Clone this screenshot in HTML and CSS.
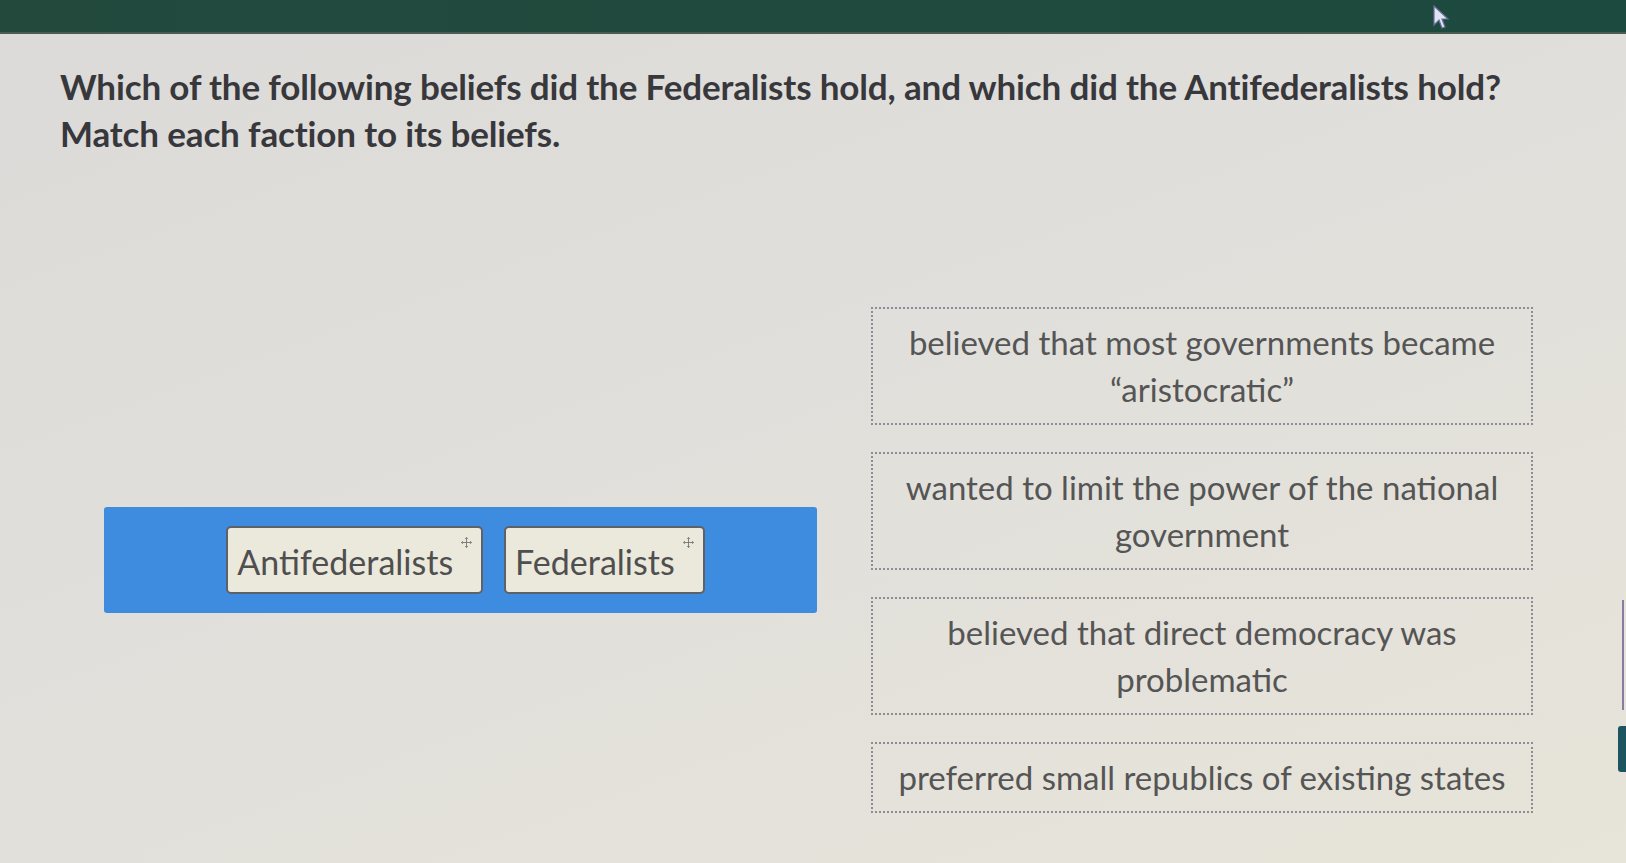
FILE: index.html
```html
<!DOCTYPE html>
<html lang="en">
<head>
<meta charset="utf-8">
<title>Match each faction to its beliefs</title>
<link rel="stylesheet" href="styles.css">
</head>
<body>
  <div class="topbar">
    <svg class="cursor" width="18" height="26" viewBox="0 0 18 26"><path d="M2 1 L2 20 L7 15 L10 23 L13 22 L10 14 L16 14 Z" fill="#dfe4f2" stroke="#6b6f9a" stroke-width="1.2"/></svg>
  </div>
  <main class="page">
    <div class="question">
      <p>Which of the following beliefs did the Federalists hold, and which did the Antifederalists hold?</p>
      <p>Match each faction to its beliefs.</p>
    </div>
    <div class="match">
      <div class="bank">
        <div class="tile">
          <span class="tile-label">Antifederalists</span>
          <svg class="move" viewBox="0 0 12 12"><path d="M6 0.5 V11.5 M0.5 6 H11.5 M4.5 2 L6 0.5 L7.5 2 M4.5 10 L6 11.5 L7.5 10 M2 4.5 L0.5 6 L2 7.5 M10 4.5 L11.5 6 L10 7.5" fill="none" stroke="#777" stroke-width="1"/></svg>
        </div>
        <div class="tile">
          <span class="tile-label">Federalists</span>
          <svg class="move" viewBox="0 0 12 12"><path d="M6 0.5 V11.5 M0.5 6 H11.5 M4.5 2 L6 0.5 L7.5 2 M4.5 10 L6 11.5 L7.5 10 M2 4.5 L0.5 6 L2 7.5 M10 4.5 L11.5 6 L10 7.5" fill="none" stroke="#777" stroke-width="1"/></svg>
        </div>
      </div>
      <div class="targets">
        <div class="target">believed that most governments became “aristocratic”</div>
        <div class="target">wanted to limit the power of the national government</div>
        <div class="target">believed that direct democracy was problematic</div>
        <div class="target">preferred small republics of existing states</div>
      </div>
    </div>
  </main>
  <div class="edge-line"></div>
  <div class="edge-tab"></div>
</body>
</html>
```
FILE: styles.css
```css
html, body {
  margin: 0;
  padding: 0;
}
body {
  width: 1626px;
  height: 863px;
  overflow: hidden;
  font-family: Lato, "Open Sans", "Liberation Sans", sans-serif;
  color: #3c3c3c;
  background: linear-gradient(160deg, #dbdad8 0%, #e0dfdb 45%, #e7e4d9 100%);
  position: relative;
}
.topbar {
  height: 32px;
  background: linear-gradient(90deg, #23493d 0%, #1f4a3d 60%, #1d4a3f 100%);
  border-bottom: 2px solid #4a5a54;
  position: relative;
}
.cursor {
  position: absolute;
  left: 1432px;
  top: 5px;
}
.page {
  padding: 29px 0 0 0;
}
.question {
  padding-left: 60px;
}
.question p {
  margin: 0;
  font-size: 35px;
  font-weight: 700;
  line-height: 47px;
  color: #38383c;
  letter-spacing: -0.15px;
}
.match {
  display: flex;
  align-items: center;
  margin-top: 150px;
}
.bank {
  margin-left: 104px;
  width: 713px;
  height: 106px;
  background: #3d8ce0;
  border-radius: 3px;
  display: flex;
  align-items: center;
  justify-content: center;
  gap: 21px;
  box-sizing: border-box;
  padding-left: 10px;
}
.tile {
  height: 68px;
  box-sizing: border-box;
  background: #ebe8dc;
  border: 2px solid #5e6168;
  border-radius: 5px;
  display: flex;
  align-items: center;
  padding: 2px 10px 0 9px;
  position: relative;
}
.tile-label {
  font-size: 34px;
  color: #4f4f4f;
  padding-right: 18px;
}
.move {
  position: absolute;
  right: 9px;
  top: 9px;
  width: 11px;
  height: 11px;
}
.targets {
  margin-left: 54px;
  width: 662px;
  display: flex;
  flex-direction: column;
  gap: 27px;
}
.target {
  border: 2px dotted #8c8c96;
  padding: 10px 6px;
  text-align: center;
  font-size: 33px;
  line-height: 47px;
  color: #555;
}
.edge-line {
  position: absolute;
  right: 2px;
  top: 600px;
  width: 2px;
  height: 110px;
  background: #8a7aa6;
}
.edge-tab {
  position: absolute;
  right: 0;
  top: 726px;
  width: 8px;
  height: 46px;
  background: #1c5560;
  border-radius: 3px 0 0 3px;
}
```
